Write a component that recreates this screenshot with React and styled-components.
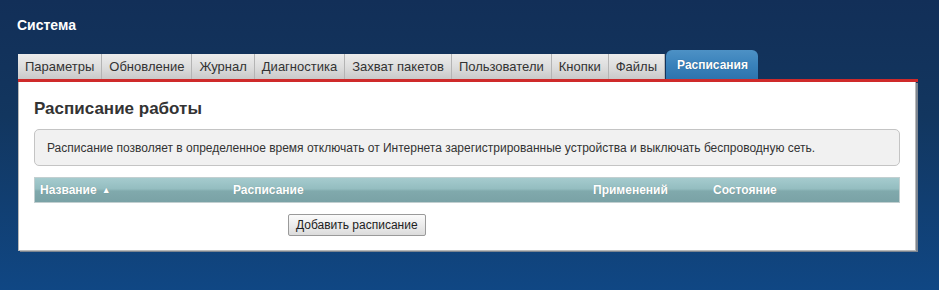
import React from "react";
import styled, { createGlobalStyle } from "styled-components";

const Global = createGlobalStyle`
  html, body { margin: 0; padding: 0; }
  body {
    width: 939px;
    height: 290px;
    overflow: hidden;
    font-family: "Liberation Sans", Arial, sans-serif;
    background: linear-gradient(180deg, #122f58 0%, #12365f 40%, #104784 100%);
  }
`;

const Page = styled.div`
  padding: 17px 21px 0 17px;
`;

const Title = styled.h1`
  margin: 0;
  font-size: 14px;
  line-height: 16px;
  font-weight: bold;
  color: #fff;
`;

const TabBar = styled.div`
  display: flex;
  align-items: flex-end;
  margin-top: 17px;
  height: 29px;
  padding-left: 1px;
`;

const Tab = styled.div`
  box-sizing: border-box;
  height: ${(p) => (p.$active ? "29px" : "25px")};
  padding: ${(p) => (p.$active ? "0 10px 0 11px" : "0 7px")};
  display: flex;
  align-items: center;
  font-size: ${(p) => (p.$active ? "12px" : "13px")};
  font-weight: ${(p) => (p.$active ? "bold" : "normal")};
  white-space: nowrap;
  color: ${(p) => (p.$active ? "#fff" : "#333")};
  text-shadow: ${(p) => (p.$active ? "0 0 1px rgba(0,0,0,0.35)" : "none")};
  background: ${(p) =>
    p.$active
      ? "linear-gradient(180deg, #4d91c5 0%, #3a82bb 50%, #2d74ae 100%)"
      : "linear-gradient(180deg, #ececec 0%, #dcdcdc 55%, #c9c9c9 100%)"};
  border-right: ${(p) => (p.$active ? "none" : "1px solid #b4b4b4")};
  border-radius: ${(p) => (p.$active ? "6px 6px 0 0" : "0")};
  margin-left: ${(p) => (p.$active ? "1px" : "0")};
`;

const RedLine = styled.div`
  height: 3px;
  margin-left: 1px;
  background: #cf2a2a;
`;

const Panel = styled.div`
  background: #fff;
  border: 1px solid #b9b9b9;
  border-top: none;
  box-shadow: 2px 1px 0 #7d8590;
  padding: 17px 15px 14px 15px;
  margin-left: 1px;
  margin-right: 2px;
`;

const Heading = styled.h2`
  margin: 0;
  font-size: 17px;
  line-height: 20px;
  font-weight: bold;
  color: #333;
`;

const InfoBox = styled.div`
  margin-top: 10px;
  box-sizing: border-box;
  height: 37px;
  display: flex;
  align-items: center;
  padding: 0 12px;
  background: #f1f1f1;
  border: 1px solid #c4c4c4;
  border-radius: 5px;
  font-size: 12px;
  color: #333;
`;

const TableHead = styled.div`
  margin-top: 11px;
  box-sizing: border-box;
  height: 26px;
  display: grid;
  grid-template-columns: 193px 360px 120px 1fr;
  align-items: center;
  padding-left: 5px;
  border: 1px solid #c2cfd0;
  background: linear-gradient(
    180deg,
    #a5cbce 0%,
    #94bdc0 45%,
    #80a9ac 55%,
    #7aa2a6 100%
  );
`;

const HeadCell = styled.div`
  font-size: 12px;
  font-weight: bold;
  color: #fff;
  text-shadow: 0 0 1px rgba(0, 0, 0, 0.2);
  display: flex;
  align-items: center;
  gap: 5px;
`;

const SortArrow = styled.span`
  font-size: 9px;
  line-height: 1;
`;

const Footer = styled.div`
  margin-top: 11px;
  padding-left: 254px;
`;

const Button = styled.button`
  box-sizing: border-box;
  height: 22px;
  padding: 0 7px;
  font-family: "Liberation Sans", Arial, sans-serif;
  font-size: 12px;
  color: #222;
  background: linear-gradient(180deg, #fbfbfb 0%, #ececec 50%, #dcdcdc 100%);
  border: 1px solid #9a9a9a;
  border-radius: 2px;
`;

const tabs = [
  "Параметры",
  "Обновление",
  "Журнал",
  "Диагностика",
  "Захват пакетов",
  "Пользователи",
  "Кнопки",
  "Файлы",
];

export default function App() {
  return (
    <Page>
      <Global />
      <Title>Система</Title>
      <TabBar>
        {tabs.map((t) => (
          <Tab key={t}>{t}</Tab>
        ))}
        <Tab $active>Расписания</Tab>
      </TabBar>
      <RedLine />
      <Panel>
        <Heading>Расписание работы</Heading>
        <InfoBox>
          Расписание позволяет в определенное время отключать от Интернета
          зарегистрированные устройства и выключать беспроводную сеть.
        </InfoBox>
        <TableHead>
          <HeadCell>
            Название <SortArrow>▲</SortArrow>
          </HeadCell>
          <HeadCell>Расписание</HeadCell>
          <HeadCell>Применений</HeadCell>
          <HeadCell>Состояние</HeadCell>
        </TableHead>
        <Footer>
          <Button>Добавить расписание</Button>
        </Footer>
      </Panel>
    </Page>
  );
}
